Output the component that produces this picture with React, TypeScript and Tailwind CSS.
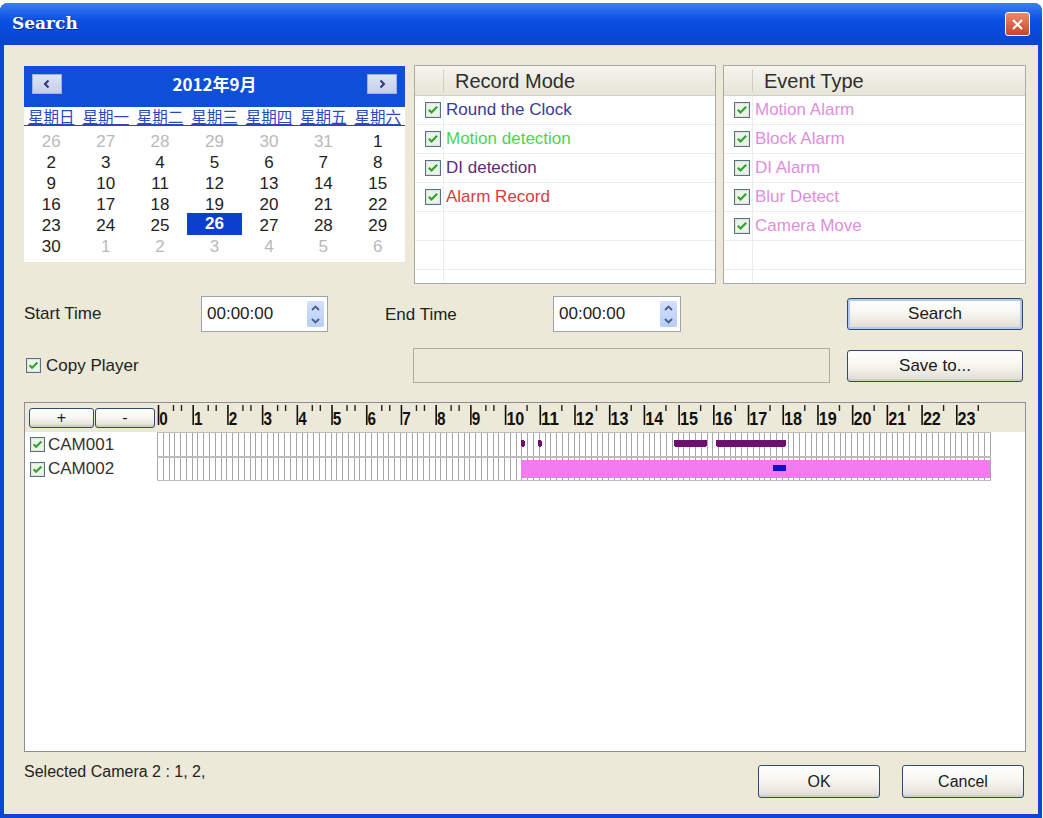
import React from "react";

function CheckBox({ size = 15 }: { size?: number }) {
  return (
    <svg width={size} height={size} viewBox="0 0 15 15" className="shrink-0">
      <rect x="0.5" y="0.5" width="14" height="14" fill="#eef3ea" stroke="#587189" />
      <rect x="1.5" y="1.5" width="12" height="12" fill="none" stroke="#dfe5da" />
      <path d="M3.6 7.2 L6.1 9.8 L11.4 4.5" stroke="#2aa52a" strokeWidth="2.1" fill="none" />
    </svg>
  );
}

function XPButton({ children, className = "", def = false }: { children: React.ReactNode; className?: string; def?: boolean }) {
  return (
    <div
      className={
        "flex items-center justify-center shrink-0 rounded-[3px] border border-[#2f4a6e] bg-linear-to-b from-[#ffffff] via-[#f6f5f0] to-[#dedbd0] text-[#1a1a1a] " +
        (def ? "shadow-[inset_0_0_0_2px_#b3c8ee] " : "shadow-[inset_0_-2px_0_#d3cfc3] ") +
        className
      }
    >
      {children}
    </div>
  );
}

function NavBtn({ dir }: { dir: "l" | "r" }) {
  return (
    <div className="w-[30px] h-[20px] bg-linear-to-b from-[#dde4f7] to-[#c3cdec] border border-[#9fb0dd] flex items-center justify-center">
      <svg width="10" height="10" viewBox="0 0 10 10">
        {dir === "l" ? (
          <path d="M6.5 1.5 L3 5 L6.5 8.5" stroke="#2a3a7a" strokeWidth="2" fill="none" />
        ) : (
          <path d="M3.5 1.5 L7 5 L3.5 8.5" stroke="#2a3a7a" strokeWidth="2" fill="none" />
        )}
      </svg>
    </div>
  );
}

const weeks: [number, boolean][][] = [
  [[26, true], [27, true], [28, true], [29, true], [30, true], [31, true], [1, false]],
  [[2, false], [3, false], [4, false], [5, false], [6, false], [7, false], [8, false]],
  [[9, false], [10, false], [11, false], [12, false], [13, false], [14, false], [15, false]],
  [[16, false], [17, false], [18, false], [19, false], [20, false], [21, false], [22, false]],
  [[23, false], [24, false], [25, false], [26, false], [27, false], [28, false], [29, false]],
  [[30, false], [1, true], [2, true], [3, true], [4, true], [5, true], [6, true]],
];

const weekdays = ["星期日", "星期一", "星期二", "星期三", "星期四", "星期五", "星期六"];

function Calendar() {
  return (
    <div className="w-[381px] h-[196px] mt-[1px] bg-white flex flex-col shrink-0">
      <div className="h-[41px] bg-[#0e4fd9] flex items-start justify-between px-[8px] pt-[8px]">
        <NavBtn dir="l" />
        <div className="h-[20px] flex items-center text-white font-bold text-[17px] font-['Noto_Sans_CJK_SC',sans-serif]">
          2012年9月
        </div>
        <NavBtn dir="r" />
      </div>
      <div className="h-[19px] grid grid-cols-7 border-b border-[#4a4a4a] font-['Noto_Sans_CJK_SC',sans-serif] text-[15.5px] leading-[18px] text-[#2a48c4]">
        {weekdays.map((d) => (
          <div key={d} className="text-center underline">
            {d}
          </div>
        ))}
      </div>
      <div className="pt-[3px] flex flex-col">
        {weeks.map((w, i) => (
          <div key={i} className="h-[21px] grid grid-cols-7">
            {w.map(([n, other], j) => {
              const sel = i === 4 && j === 3;
              return (
                <div
                  key={j}
                  className={
                    "flex items-center justify-center text-[17px] " +
                    (sel ? "bg-[#0b40cf] text-white font-bold h-[22px]" : other ? "text-[#b9b9b9]" : "text-[#222]")
                  }
                >
                  {n}
                </div>
              );
            })}
          </div>
        ))}
      </div>
    </div>
  );
}

type Item = { label: string; color: string };

function ListPanel({ title, items, width }: { title: string; items: Item[]; width: string }) {
  const rows: (Item | null)[] = [...items];
  while (rows.length < 7) rows.push(null);
  return (
    <div className={"h-[219px] shrink-0 border border-[#a9a8a1] bg-white flex flex-col overflow-hidden " + width}>
      <div className="h-[30px] shrink-0 flex items-center bg-linear-to-b from-[#f5f4ee] to-[#e7e5d8] border-b border-[#d3d0c1]">
        <div className="w-[29px] h-[22px] border-r border-[#d0cdbd]" />
        <span className="pl-[11px] text-[20px] text-[#2e2e2e]">{title}</span>
      </div>
      {rows.map((it, i) => (
        <div key={i} className="h-[29px] shrink-0 flex border-b border-[#ececec]">
          <div className="w-[29px] shrink-0 border-r border-[#ececec] flex items-center pl-[10px]">
            {it && <CheckBox size={16} />}
          </div>
          {it && <span className={"pl-[2px] self-center text-[17px] " + it.color}>{it.label}</span>}
        </div>
      ))}
    </div>
  );
}

function TimeBox({ width }: { width: string }) {
  return (
    <div className={"h-[36px] shrink-0 bg-white border border-[#9fa4aa] flex items-center justify-between pl-[5px] pr-[3px] " + width}>
      <span className="text-[17px] text-[#222]">00:00:00</span>
      <div className="w-[17px] h-[26px] rounded-[2px] bg-linear-to-b from-[#d3e0fc] to-[#b9cdf8] flex flex-col items-center justify-around">
        <svg width="9" height="6" viewBox="0 0 9 6">
          <path d="M1 5 L4.5 1.5 L8 5" stroke="#4a5f8c" strokeWidth="1.8" fill="none" />
        </svg>
        <svg width="9" height="6" viewBox="0 0 9 6">
          <path d="M1 1 L4.5 4.5 L8 1" stroke="#4a5f8c" strokeWidth="1.8" fill="none" />
        </svg>
      </div>
    </div>
  );
}

const HW = 833 / 24;

function Ruler() {
  const els: React.ReactNode[] = [];
  for (let h = 0; h < 24; h++) {
    const x = 3.5 + h * HW;
    els.push(<line key={"t" + h} x1={x} y1={2} x2={x} y2={22} stroke="#111" strokeWidth={1.6} />);
    els.push(
      <text
        key={"n" + h}
        x={x + 0.8}
        y={22}
        fontSize={18}
        fontWeight="bold"
        fontFamily="Liberation Sans, Arial, sans-serif"
        fill="#111"
        textLength={h < 10 ? 8.5 : 18}
        lengthAdjust="spacingAndGlyphs"
      >
        {h}
      </text>
    );
    const minors = h < 10 ? [15, 23] : [21.5];
    minors.forEach((m) =>
      els.push(<line key={"m" + h + "_" + m} x1={x + m} y1={2} x2={x + m} y2={8} stroke="#222" strokeWidth={1.4} />)
    );
  }
  return (
    <svg width="870" height="29" className="shrink-0">
      {els}
    </svg>
  );
}

type Bar = { x: number; w: number; y: number; h: number; color: string };

function GridRow({ height, bars }: { height: number; bars: Bar[] }) {
  const lines: React.ReactNode[] = [];
  for (let i = 0; i <= 144; i++) {
    const x = Math.round(i * (833 / 144)) + 0.5;
    lines.push(<line key={i} x1={x} y1={0} x2={x} y2={height} stroke="#a6a6a6" strokeWidth={1} />);
  }
  return (
    <svg width="834" height={height} className="shrink-0" shapeRendering="crispEdges">
      {lines}
      <line x1={0} y1={0.5} x2={834} y2={0.5} stroke="#bdbdbd" />
      <line x1={0} y1={height - 0.5} x2={834} y2={height - 0.5} stroke="#bdbdbd" />
      {bars.map((b, i) => (
        <rect key={i} x={b.x} y={b.y} width={b.w} height={b.h} fill={b.color} rx={1} />
      ))}
    </svg>
  );
}

export default function App() {
  const recordItems: Item[] = [
    { label: "Round the Clock", color: "text-[#3b3b97]" },
    { label: "Motion detection", color: "text-[#4fd34f]" },
    { label: "DI detection", color: "text-[#5e2d73]" },
    { label: "Alarm Record", color: "text-[#cf3f3f]" },
  ];
  const eventItems: Item[] = [
    { label: "Motion Alarm", color: "text-[#de8ede]" },
    { label: "Block Alarm", color: "text-[#de8ede]" },
    { label: "DI Alarm", color: "text-[#de8ede]" },
    { label: "Blur Detect", color: "text-[#de8ede]" },
    { label: "Camera Move", color: "text-[#de8ede]" },
  ];
  const purple = "#6e0f6e";
  return (
    <div className="w-[1043px] h-[818px] bg-white pt-[3px] overflow-hidden font-['Liberation_Sans',Arial,sans-serif] text-[#222]">
      <div className="w-[1042px] h-[815px] bg-[#0b46d4] rounded-t-[8px] flex flex-col">
        {/* Title bar */}
        <div className="h-[42px] shrink-0 rounded-t-[8px] bg-linear-to-b from-[#3a7ff2] via-[#0b50e3] via-[40%] to-[#0944cf] flex items-center justify-between pl-[12px] pr-[12px]">
          <span className="text-white font-bold text-[17px] font-['DejaVu_Serif',serif] [text-shadow:1px_1px_0_#0a2a8a]">Search</span>
          <div className="w-[25px] h-[24px] rounded-[3px] border border-white bg-linear-to-b from-[#ec8a6c] to-[#c7442a] flex items-center justify-center">
            <svg width="13" height="13" viewBox="0 0 13 13">
              <path d="M2 2 L11 11 M11 2 L2 11" stroke="white" strokeWidth="2.2" />
            </svg>
          </div>
        </div>
        {/* Body */}
        <div className="flex-1 mx-[4px] mb-[4px] bg-[#ece9d8] pl-[20px] pr-[12px] pt-[20px] flex flex-col">
          {/* Top row */}
          <div className="flex items-start">
            <Calendar />
            <div className="ml-[9px]">
              <ListPanel title="Record Mode" items={recordItems} width="w-[302px]" />
            </div>
            <div className="ml-[7px]">
              <ListPanel title="Event Type" items={eventItems} width="w-[303px]" />
            </div>
          </div>
          {/* Time row */}
          <div className="mt-[12px] h-[36px] flex items-center">
            <div className="w-[177px] shrink-0 text-[17px]">Start Time</div>
            <TimeBox width="w-[127px]" />
            <div className="w-[57px] shrink-0" />
            <div className="w-[168px] shrink-0 text-[17px] pt-[2px]">End Time</div>
            <TimeBox width="w-[128px]" />
            <div className="w-[166px] shrink-0" />
            <XPButton def className="w-[176px] h-[32px] text-[17px]">
              Search
            </XPButton>
          </div>
          {/* Copy row */}
          <div className="mt-[16px] h-[35px] flex items-center">
            <div className="w-[389px] shrink-0 flex items-center pl-[2px]">
              <CheckBox />
              <span className="ml-[5px] text-[17px]">Copy Player</span>
            </div>
            <div className="w-[417px] h-[35px] shrink-0 border border-[#aeaca3] bg-[#ece9d8]" />
            <div className="w-[17px] shrink-0" />
            <XPButton className="w-[176px] h-[32px] text-[17px]">Save to...</XPButton>
          </div>
          {/* Timeline panel */}
          <div className="mt-[19px] w-[1002px] h-[350px] border border-[#8f8f8f] bg-white flex flex-col">
            <div className="h-[29px] shrink-0 bg-[#ece9d8] flex items-center">
              <XPButton className="ml-[4px] w-[65px] h-[20px] text-[16px]">+</XPButton>
              <XPButton className="ml-[1px] w-[60px] h-[20px] text-[16px]">-</XPButton>
              <Ruler />
            </div>
            <div className="h-[25px] flex">
              <div className="w-[132px] shrink-0 flex items-center pl-[5px]">
                <CheckBox />
                <span className="ml-[3px] text-[17px] text-[#333]">CAM001</span>
              </div>
              <GridRow
                height={25}
                bars={[
                  { x: 364, w: 3.5, y: 8, h: 6.5, color: purple },
                  { x: 381, w: 3.5, y: 8, h: 6.5, color: purple },
                  { x: 517, w: 33, y: 8, h: 6.5, color: purple },
                  { x: 559, w: 70, y: 8, h: 6.5, color: purple },
                ]}
              />
            </div>
            <div className="h-[24px] flex">
              <div className="w-[132px] shrink-0 flex items-center pl-[5px]">
                <CheckBox />
                <span className="ml-[3px] text-[17px] text-[#333]">CAM002</span>
              </div>
              <GridRow
                height={24}
                bars={[
                  { x: 364, w: 469, y: 3, h: 18, color: "#f27bf0" },
                  { x: 616, w: 13, y: 8, h: 6, color: "#1010d0" },
                ]}
              />
            </div>
          </div>
          {/* Bottom row */}
          <div className="mt-[13px] flex items-start">
            <div className="flex-1 text-[16px] leading-[14px]">Selected Camera 2 : 1, 2,</div>
            <XPButton className="w-[122px] h-[33px] text-[16px]">OK</XPButton>
            <XPButton className="ml-[22px] mr-[2px] w-[122px] h-[33px] text-[16px]">Cancel</XPButton>
          </div>
        </div>
      </div>
    </div>
  );
}
